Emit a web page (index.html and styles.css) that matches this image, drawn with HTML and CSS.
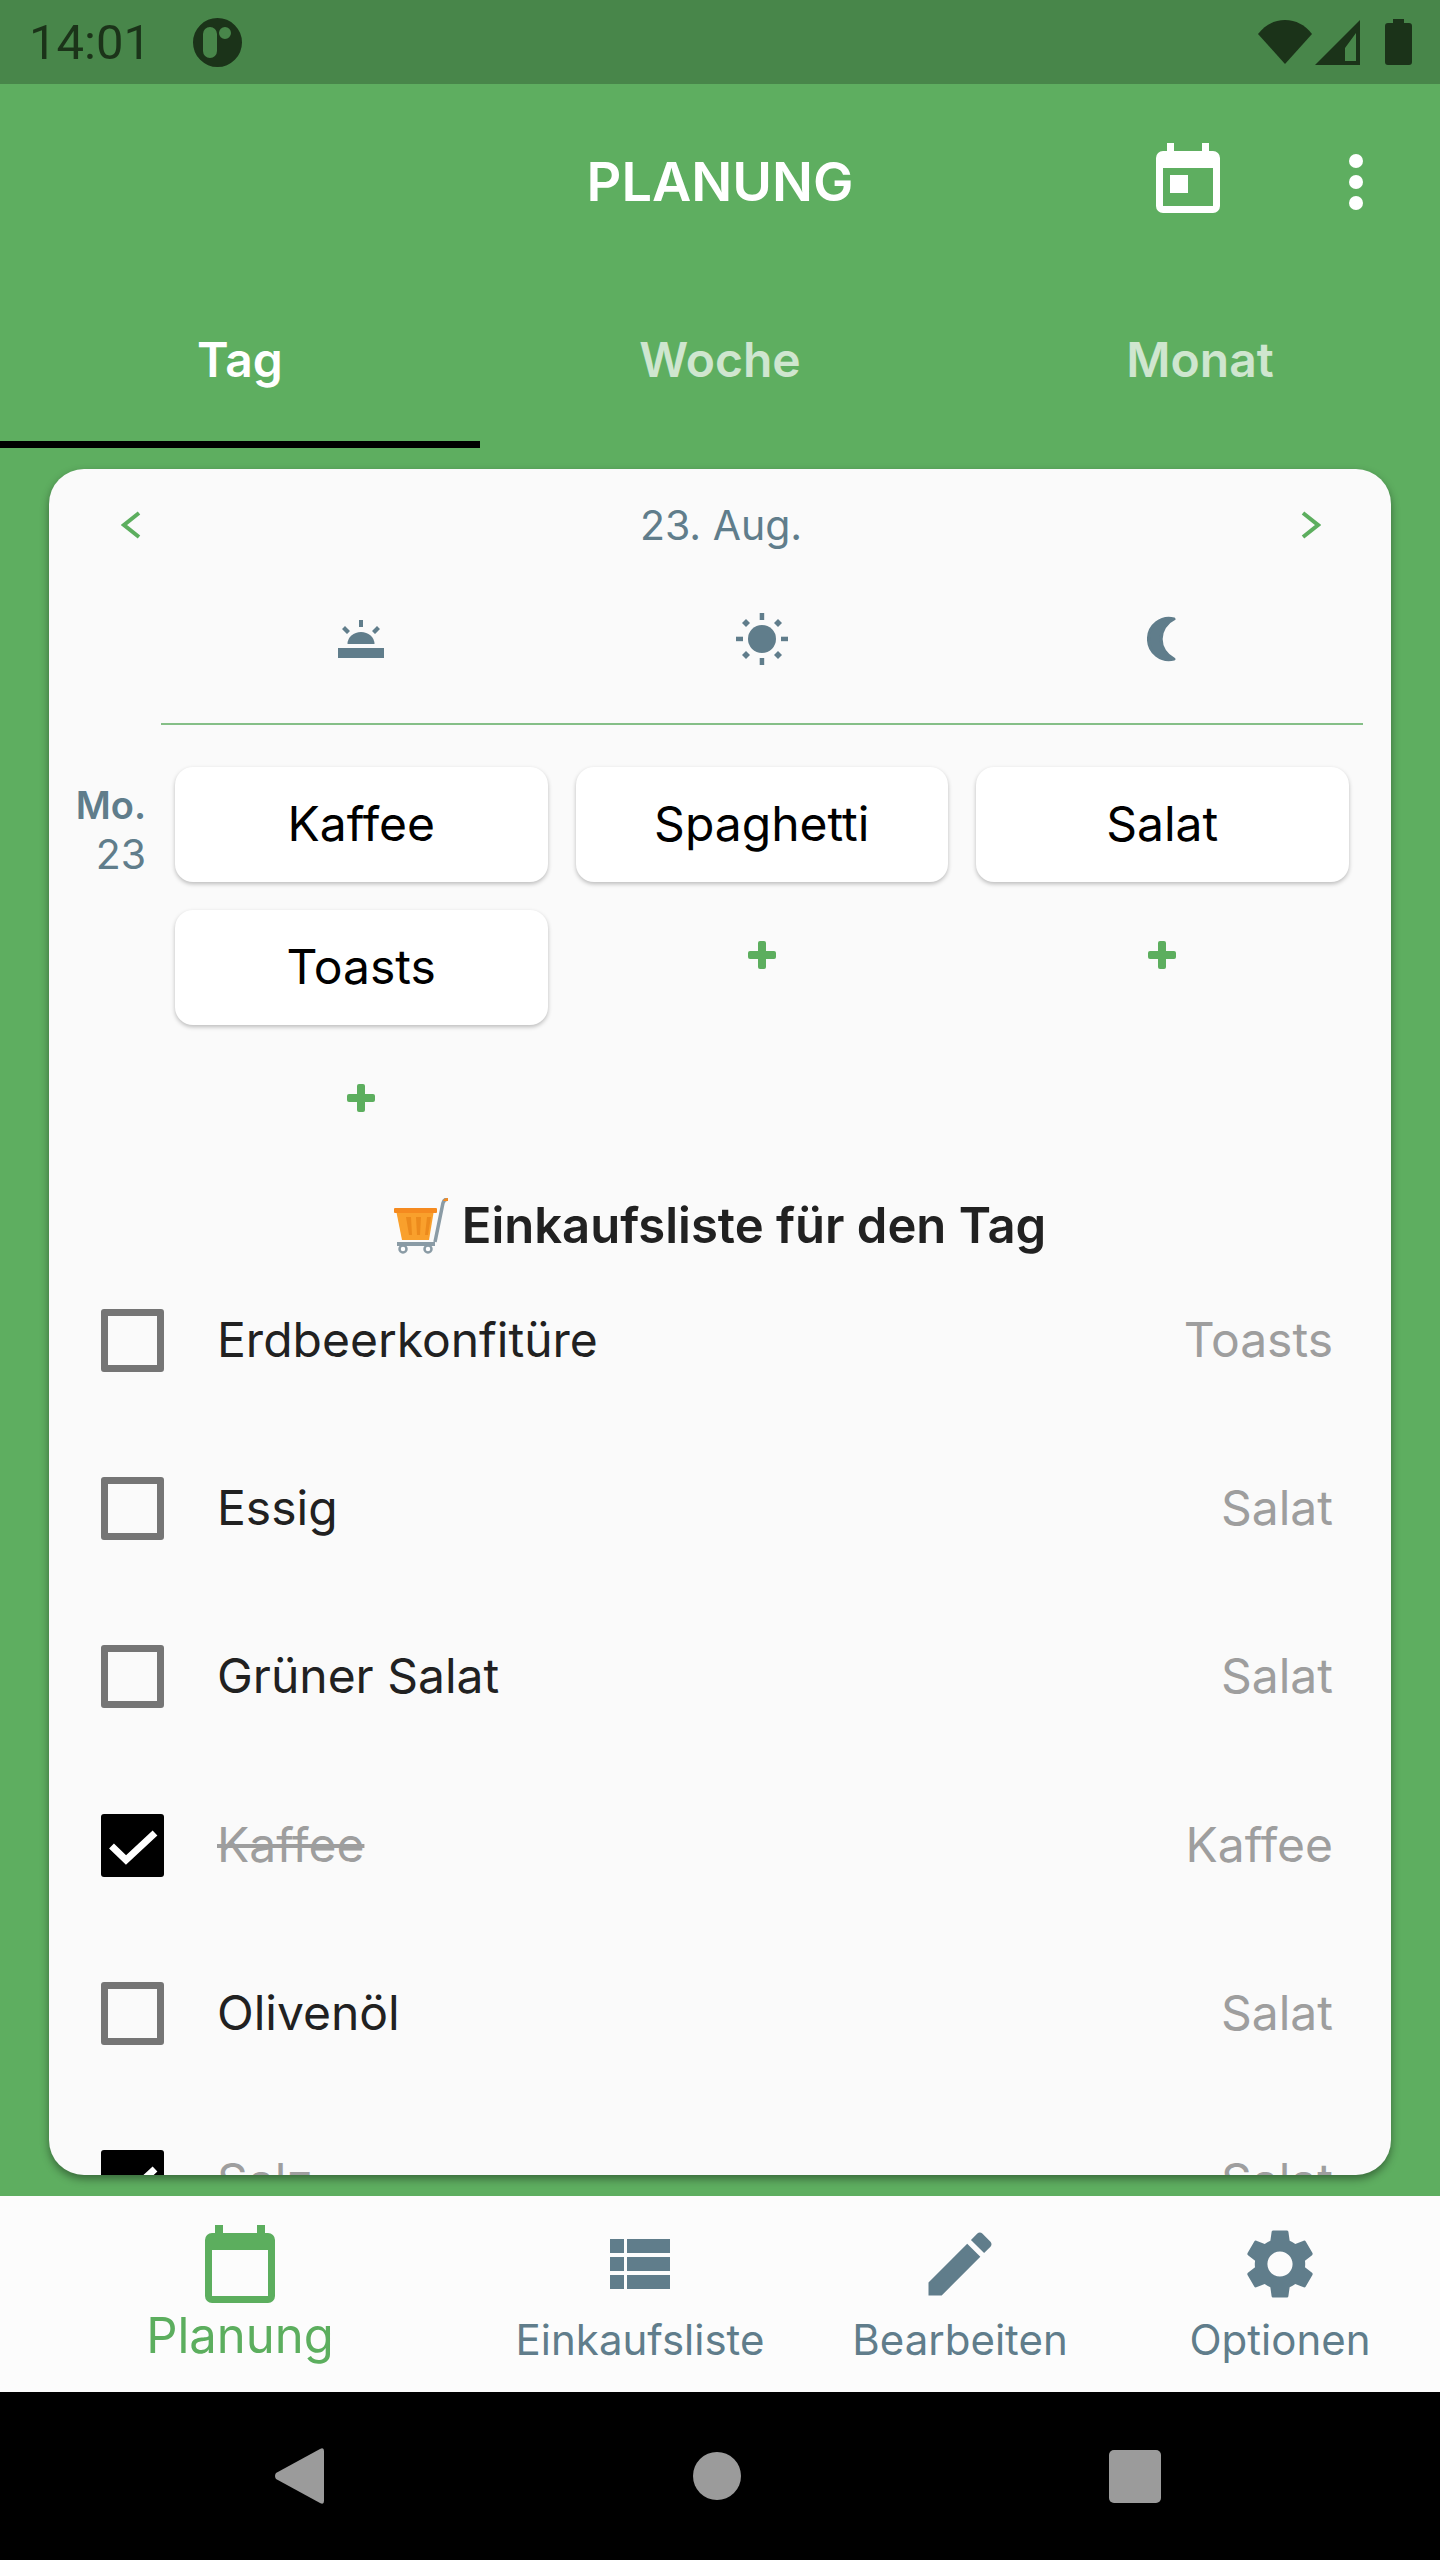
FILE: index.html
```html
<!DOCTYPE html>
<html lang="de">
<head>
  <meta charset="UTF-8" />
  <title>Planung</title>
  <link rel="stylesheet" href="styles.css">
</head>
<body>
  <div class="phone">

    <div class="statusbar">
      <span class="clock">14:01</span>
      <svg class="status-app" viewBox="0 0 49 49"><path fill="#1b3319" fill-rule="evenodd" d="M24.500 0a24.500 24.500 0 1 1 0 49a24.500 24.500 0 0 1 0-49zM17 9a7 7 0 0 0-7 7v17a7 7 0 0 0 14 0V16a7 7 0 0 0-7-7zM32 9a6 6 0 1 0 0 12a6 6 0 0 0 0-12z"/></svg>
      <span class="spacer"></span>
      <svg class="status-wifi" viewBox="0 0 54 44"><path fill="#1b3319" d="M27 44L0 14C7 5 16 0 27 0s20 5 27 14z"/></svg>
      <svg class="status-signal" viewBox="0 0 45 45"><path fill="#1b3319" fill-rule="evenodd" d="M45 0v45H0zM41 13L30 28v13h11z"/></svg>
      <svg class="status-battery" viewBox="0 0 27 46"><path fill="#1b3319" d="M8 0h11v4h5a3 3 0 0 1 3 3v36a3 3 0 0 1-3 3H3a3 3 0 0 1-3-3V7a3 3 0 0 1 3-3h5z"/></svg>
    </div>

    <div class="main">
      <header class="appbar">
        <h1>PLANUNG</h1>
        <svg class="appbar-cal" viewBox="0 0 64 70"><path fill="#fff" fill-rule="evenodd" d="M11 0h7v8h28V0h7v8h4a7 7 0 0 1 7 7v48a7 7 0 0 1-7 7H7a7 7 0 0 1-7-7V15a7 7 0 0 1 7-7h4zM7 25v38h50V25zM14 32h18v18H14z"/></svg>
        <svg class="appbar-menu" viewBox="0 0 14 56"><circle cx="7" cy="7" r="7" fill="#fff"/><circle cx="7" cy="28" r="7" fill="#fff"/><circle cx="7" cy="49" r="7" fill="#fff"/></svg>
      </header>

      <nav class="tabs">
        <div class="tab active">Tag</div>
        <div class="tab">Woche</div>
        <div class="tab">Monat</div>
      </nav>

      <section class="card">
        <div class="date-row">
          <svg class="arrow" viewBox="0 0 20 28"><path d="M18 2L3 14l15 12" fill="none" stroke="#5cae5e" stroke-width="4"/></svg>
          <span class="date">23. Aug.</span>
          <svg class="arrow" viewBox="0 0 20 28"><path d="M2 2l15 12L2 26" fill="none" stroke="#5cae5e" stroke-width="4"/></svg>
        </div>

        <div class="meal-head">
          <div class="meal-icon">
            <svg viewBox="0 0 46 38" width="46" height="38"><g fill="#607d8b"><rect y="28" width="46" height="10"/><path d="M9.500 24a13.500 12 0 0 1 27 0z"/><rect x="21" y="0" width="4" height="7"/><path d="M4 9l3-3 5 5-3 3zM42 9l-3-3-5 5 3 3z"/></g></svg>
          </div>
          <div class="meal-icon">
            <svg viewBox="0 0 52 52" width="52" height="52"><g fill="#607d8b"><circle cx="26" cy="26" r="14"/><rect x="23.700" y="0" width="4.500" height="7"/><rect x="23.700" y="45" width="4.500" height="7"/><rect x="0" y="23.700" width="7" height="4.500"/><rect x="45" y="23.700" width="7" height="4.500"/><path d="M10 6l4 4-4 4-4-4zM42 6l4 4-4 4-4-4zM10 38l4 4-4 4-4-4zM42 38l4 4-4 4-4-4z"/></g></svg>
          </div>
          <div class="meal-icon">
            <svg viewBox="0 0 30 46" width="30" height="46"><path fill="#607d8b" stroke="#607d8b" stroke-width="3" stroke-linejoin="round" d="M27 3A20.600 20.600 0 1 0 27 43A22 22 0 0 1 27 3z"/></svg>
          </div>
        </div>

        <div class="plan">
          <div class="day">
            <span class="day-name">Mo.</span>
            <span class="day-num">23</span>
          </div>
          <div class="plan-col">
            <div class="dish">Kaffee</div>
            <div class="dish">Toasts</div>
            <div class="add"><svg viewBox="0 0 28 28"><g fill="#5cae5e"><rect x="10" width="8" height="28" rx="2"/><rect y="10" width="28" height="8" rx="2"/></g></svg></div>
          </div>
          <div class="plan-col">
            <div class="dish">Spaghetti</div>
            <div class="add"><svg viewBox="0 0 28 28"><g fill="#5cae5e"><rect x="10" width="8" height="28" rx="2"/><rect y="10" width="28" height="8" rx="2"/></g></svg></div>
          </div>
          <div class="plan-col">
            <div class="dish">Salat</div>
            <div class="add"><svg viewBox="0 0 28 28"><g fill="#5cae5e"><rect x="10" width="8" height="28" rx="2"/><rect y="10" width="28" height="8" rx="2"/></g></svg></div>
          </div>
        </div>

        <h2 class="list-title">
          <svg viewBox="0 0 54 56" width="54" height="56">
            <path d="M41 44L49 5Q50 1 54 1" fill="none" stroke="#8a9ba5" stroke-width="3.500"/>
            <path d="M49 3Q50 0 54 0v3z" fill="#f58a1f"/>
            <path d="M2 12h38l-5 30H8z" fill="#f9a02c"/>
            <rect y="10" width="43" height="5" rx="1" fill="#f58a1f"/>
            <path d="M12 19h5l1 18h-3zM22 19h5l-1 18h-3zM33 19h4l-3 18h-3z" fill="#ec8a1c"/>
            <path d="M3 46h38" stroke="#8a9ba5" stroke-width="4"/>
            <circle cx="9" cy="51" r="3.500" fill="#fff" stroke="#8a9ba5" stroke-width="2.500"/>
            <circle cx="34" cy="51" r="3.500" fill="#fff" stroke="#8a9ba5" stroke-width="2.500"/>
          </svg>
          Einkaufsliste für den Tag
        </h2>

        <ul class="list">
          <li class="item"><span class="box"></span><span class="item-name">Erdbeerkonfitüre</span><span class="item-meal">Toasts</span></li>
          <li class="item"><span class="box"></span><span class="item-name">Essig</span><span class="item-meal">Salat</span></li>
          <li class="item"><span class="box"></span><span class="item-name">Grüner Salat</span><span class="item-meal">Salat</span></li>
          <li class="item done">
            <span class="box"><svg viewBox="0 0 63 63"><path d="M10.500 32L25 46 54 19" fill="none" stroke="#fff" stroke-width="7"/></svg></span>
            <span class="item-name">Kaffee</span><span class="item-meal">Kaffee</span>
          </li>
          <li class="item"><span class="box"></span><span class="item-name">Olivenöl</span><span class="item-meal">Salat</span></li>
          <li class="item done">
            <span class="box"><svg viewBox="0 0 63 63"><path d="M10.500 32L25 46 54 19" fill="none" stroke="#fff" stroke-width="7"/></svg></span>
            <span class="item-name">Salz</span><span class="item-meal">Salat</span>
          </li>
        </ul>
      </section>
    </div>

    <nav class="bottomnav">
      <div class="nav-item active">
        <svg class="nav-cal" viewBox="0 0 70 78"><path fill="#5cae5e" fill-rule="evenodd" d="M10 0h8v8h34V0h8v8h3a7 7 0 0 1 7 7v56a7 7 0 0 1-7 7H7a7 7 0 0 1-7-7V15a7 7 0 0 1 7-7h3zM7 25v46h56V25z"/></svg>
        <span>Planung</span>
      </div>
      <div class="nav-item">
        <svg viewBox="0 0 60 50" width="60" height="50"><path fill="#607d8b" d="M0 0h14v14H0zM17 0h43v14H17zM0 18h14v14H0zM17 18h43v14H17zM0 36h14v14H0zM17 36h43v14H17z"/></svg>
        <span>Einkaufsliste</span>
      </div>
      <div class="nav-item">
        <svg viewBox="0 0 24 24" width="84" height="84"><path fill="#607d8b" d="M3 17.250V21h3.750L17.810 9.940l-3.750-3.750L3 17.250zM20.710 7.040c.390-.390.390-1.020 0-1.410l-2.340-2.340c-.390-.390-1.020-.390-1.410 0l-1.830 1.830 3.750 3.750 1.830-1.830z"/></svg>
        <span>Bearbeiten</span>
      </div>
      <div class="nav-item">
        <svg viewBox="0 0 24 24" width="84" height="84"><path fill="#607d8b" d="M19.140 12.940c.040-.300.060-.610.060-.940 0-.320-.020-.640-.070-.940l2.030-1.580c.180-.140.230-.410.120-.610l-1.920-3.320c-.120-.220-.370-.290-.590-.220l-2.390.960c-.500-.380-1.030-.700-1.620-.940l-.360-2.540c-.040-.240-.240-.410-.480-.410h-3.840c-.240 0-.430.170-.470.410l-.360 2.540c-.590.240-1.130.570-1.620.940l-2.390-.960c-.220-.080-.470 0-.590.220L2.740 8.870c-.120.210-.080.470.120.610l2.030 1.580c-.050.300-.090.630-.090.940s.020.640.070.940l-2.030 1.580c-.180.140-.230.410-.120.610l1.920 3.320c.120.220.370.290.590.220l2.390-.960c.500.380 1.030.700 1.620.940l.360 2.540c.050.240.240.410.480.410h3.840c.240 0 .440-.170.470-.410l.360-2.540c.590-.240 1.130-.560 1.620-.940l2.390.960c.220.080.470 0 .590-.220l1.920-3.320c.120-.220.070-.470-.120-.610l-2.010-1.580zM12 15.600c-1.980 0-3.600-1.620-3.600-3.600s1.620-3.600 3.600-3.600 3.600 1.620 3.600 3.600-1.620 3.600-3.600 3.600z"/></svg>
        <span>Optionen</span>
      </div>
    </nav>

    <div class="sysnav">
      <svg viewBox="0 0 50 56" width="50" height="56"><path fill="#9b9b9b" d="M1 25L45 1q4-2 4 2v50q0 4-4 2L1 31q-2-3 0-6z"/></svg>
      <span class="sys-home"></span>
      <span class="sys-recent"></span>
    </div>
  </div>
</body>
</html>
```

FILE: styles.css
```css
* {
  box-sizing: border-box;
}
body {
  margin: 0;
  font-family: Inter, "Noto Sans", sans-serif;
  background: #000;
}
.phone {
  width: 1440px;
  height: 2560px;
  display: flex;
  flex-direction: column;
  overflow: hidden;
}

/* status bar */
.statusbar {
  height: 84px;
  flex: none;
  display: flex;
  align-items: center;
  padding: 0 28px 0 29px;
  background: #48864a;
}
.clock {
  font-family: Roboto, sans-serif;
  font-size: 49px;
  color: #1b3319;
}
.status-app {
  width: 49px;
  height: 49px;
  margin-left: 42px;
}
.spacer {
  flex: 1;
}
.status-wifi {
  width: 54px;
  height: 44px;
}
.status-signal {
  width: 45px;
  height: 45px;
  margin-left: 3px;
}
.status-battery {
  width: 27px;
  height: 46px;
  margin-left: 25px;
}

/* green area */
.main {
  flex: 1;
  display: flex;
  flex-direction: column;
  background: #5eae60;
  min-height: 0;
}
.appbar {
  height: 196px;
  flex: none;
  position: relative;
  display: flex;
  align-items: center;
  justify-content: center;
  padding-bottom: 2px;
}
.appbar h1 {
  margin: 0;
  font-size: 54px;
  font-weight: 600;
  color: #fff;
}
.appbar-cal {
  position: absolute;
  left: 1156px;
  top: 59px;
  width: 64px;
  height: 70px;
}
.appbar-menu {
  position: absolute;
  left: 1349px;
  top: 70px;
  width: 14px;
  height: 56px;
}
.tabs {
  height: 168px;
  flex: none;
  display: flex;
}
.tab {
  flex: 1;
  display: flex;
  align-items: center;
  justify-content: center;
  padding-bottom: 10px;
  font-size: 48px;
  font-weight: 600;
  color: #fff;
  opacity: 0.7;
}
.tab.active {
  opacity: 1;
  border-bottom: 7px solid #000;
  padding-bottom: 3px;
}

/* card */
.card {
  flex: 1;
  min-height: 0;
  margin: 21px 49px;
  background: #fafafa;
  border-radius: 35px;
  overflow: hidden;
  box-shadow: 0 4px 8px rgba(0, 0, 0, 0.4);
}
.date-row {
  height: 112px;
  display: flex;
  align-items: center;
  justify-content: space-between;
  padding: 0 70px 0 72px;
}
.arrow {
  width: 20px;
  height: 28px;
}
.date {
  font-size: 41px;
  color: #607d8b;
}
.meal-head {
  height: 144px;
  margin: 0 28px 0 112px;
  padding: 0 0 26px 14px;
  border-bottom: 2px solid #85bf87;
  display: grid;
  grid-template-columns: repeat(3, 372.500px);
  column-gap: 28px;
  align-items: center;
}
.meal-icon {
  display: flex;
  justify-content: center;
}
.plan {
  margin-top: 42px;
  padding-left: 126px;
  display: grid;
  grid-template-columns: repeat(3, 372.500px);
  column-gap: 28px;
  position: relative;
}
.day {
  position: absolute;
  left: 0;
  top: 14px;
  width: 97px;
  display: flex;
  flex-direction: column;
  align-items: flex-end;
  color: #607d8b;
  font-size: 41px;
  line-height: 49px;
}
.day-name {
  font-size: 38px;
  font-weight: 600;
}
.plan-col {
  display: flex;
  flex-direction: column;
  gap: 28px;
}
.dish {
  height: 115px;
  display: flex;
  align-items: center;
  justify-content: center;
  padding-bottom: 2px;
  background: #fff;
  border-radius: 18px;
  font-size: 48px;
  color: #000;
  box-shadow: 0 2px 4px rgba(0, 0, 0, 0.25);
}
.add {
  height: 90px;
  display: flex;
  align-items: center;
  justify-content: center;
}
.add svg {
  width: 28px;
  height: 28px;
}
.list-title {
  margin: 0;
  padding-top: 53px;
  height: 113px;
  display: flex;
  align-items: center;
  justify-content: center;
  gap: 14px;
  font-size: 49px;
  font-weight: 600;
  line-height: 60px;
  color: #212121;
}
.list {
  margin: 0;
  padding: 0 58px 0 52px;
  list-style: none;
}
.item {
  height: 168.300px;
  display: flex;
  align-items: center;
  font-size: 48px;
  color: #212121;
}
.box {
  width: 63px;
  height: 63px;
  flex: none;
  margin-right: 53px;
  border: 7px solid #757575;
  border-radius: 3px;
}
.item-name {
  flex: 1;
  padding-bottom: 2px;
}
.item-meal {
  padding-bottom: 2px;
  color: #9e9e9e;
}
.done .box {
  border: 0;
  background: #000;
}
.done .box svg {
  display: block;
}
.done .item-name {
  color: #9e9e9e;
  text-decoration: line-through;
}

/* bottom navigation */
.bottomnav {
  height: 196px;
  flex: none;
  background: #fcfcfc;
  display: grid;
  grid-template-columns: 480px 320px 320px 320px;
}
.nav-item {
  display: flex;
  flex-direction: column;
  align-items: center;
  justify-content: flex-start;
  padding-top: 26px;
  font-size: 42px;
  line-height: 68px;
  color: #607d8b;
}
.nav-item svg {
  height: 84px;
}
.nav-item.active {
  font-size: 49px;
  line-height: 60px;
  color: #5cae5e;
}
.nav-item.active .nav-cal {
  width: 70px;
  height: 78px;
  margin-top: 3px;
  margin-bottom: 3px;
}

/* android buttons */
.sysnav {
  height: 168px;
  flex: none;
  background: #000;
  display: flex;
  align-items: center;
  justify-content: space-between;
  padding: 0 279px 0 275px;
}
.sys-home {
  width: 48px;
  height: 48px;
  border-radius: 50%;
  background: #9b9b9b;
}
.sys-recent {
  width: 52px;
  height: 53px;
  border-radius: 5px;
  background: #9b9b9b;
}
```
